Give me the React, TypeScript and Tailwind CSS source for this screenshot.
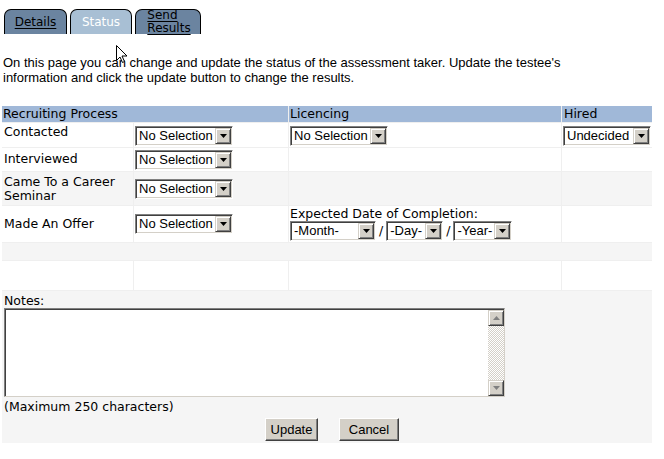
import React from "react";

const Arrow = ({ color = "#000" }: { color?: string }) => (
  <svg width="7" height="4" viewBox="0 0 7 4">
    <path d="M0 0 H7 L3.5 4 Z" fill={color} />
  </svg>
);

const ArrowUp = ({ color = "#000" }: { color?: string }) => (
  <svg width="7" height="4" viewBox="0 0 7 4">
    <path d="M0 4 H7 L3.5 0 Z" fill={color} />
  </svg>
);

const BtnBox = ({ children }: { children: React.ReactNode }) => (
  <div className="w-[16px] h-[16px] bg-[#d4d0c8] border border-t-[#d4d0c8] border-l-[#d4d0c8] border-r-[#404040] border-b-[#404040] shadow-[inset_1px_1px_#ffffff,inset_-1px_-1px_#808080] flex items-center justify-center shrink-0">
    {children}
  </div>
);

const Select = ({ label, w }: { label: string; w: string }) => (
  <div
    className={`${w} h-[20px] flex items-center bg-white border border-t-[#808080] border-l-[#808080] border-r-white border-b-white shadow-[inset_1px_1px_#404040,inset_-1px_-1px_#d4d0c8] p-[1px] font-['Liberation_Sans',Arial,sans-serif] text-[13px]`}
  >
    <span className="flex-1 pl-[2px] leading-[16px] whitespace-nowrap overflow-hidden">{label}</span>
    <BtnBox>
      <Arrow />
    </BtnBox>
  </div>
);

const Button = ({ label, w }: { label: string; w: string }) => (
  <div
    className={`${w} h-[23px] flex items-center justify-center bg-[#d4d0c8] border border-t-white border-l-white border-r-[#404040] border-b-[#404040] shadow-[inset_-1px_-1px_#808080] font-['Liberation_Sans',Arial,sans-serif] text-[13px]`}
  >
    {label}
  </div>
);

export default function App() {
  return (
    <div className="relative w-[664px] h-[459px] bg-white text-black text-[12.5px] font-['DejaVu_Sans',sans-serif]">
      {/* Tabs */}
      <div className="flex items-end gap-[3px] pl-[4px] pt-[9px] h-[34px] text-[12px]">
        <div className="w-[63px] h-[25px] bg-[#6b84a0] border border-b-0 border-black rounded-t-[7px] flex justify-center items-center">
          <span className="underline underline-offset-[2px]">Details</span>
        </div>
        <div className="w-[62px] h-[25px] bg-[#a8bfd4] border border-b-0 border-black rounded-t-[7px] flex justify-center items-center text-white">
          <span>Status</span>
        </div>
        <div className="w-[66px] h-[25px] bg-[#6b84a0] border border-b-0 border-black rounded-t-[7px] flex justify-center items-start">
          <span className="underline underline-offset-[2px] leading-[13px] -mt-[1px] pl-[2px]">
            Send
            <br />
            Results
          </span>
        </div>
      </div>

      {/* Intro */}
      <p className="mt-[21px] ml-[3px] leading-[15px] text-[13px] font-['Liberation_Sans',Arial,sans-serif]">
        On this page you can change and update the status of the assessment taker. Update the testee's
        <br />
        information and click the update button to change the results.
      </p>

      {/* Table */}
      <div className="mt-[21px] ml-[2px] w-[650px] grid grid-cols-[131px_154px_272px_90px] gap-px bg-[#efefef]">
        {/* header */}
        <div className="col-span-2 h-[16px] bg-[#a0b8d8] pl-[1px] leading-[16px]">Recruiting Process</div>
        <div className="h-[16px] bg-[#a0b8d8] pl-[1px] leading-[16px]">Licencing</div>
        <div className="h-[16px] bg-[#a0b8d8] pl-[2px] leading-[16px]">Hired</div>

        {/* Contacted */}
        <div className="h-[24px] bg-white pl-[2px] pt-[1px] leading-[15px]">Contacted</div>
        <div className="h-[24px] bg-white pl-[1px] flex items-center pt-[2px]">
          <Select label="No Selection" w="w-[98px]" />
        </div>
        <div className="h-[24px] bg-white pl-[1px] flex items-center pt-[2px]">
          <Select label="No Selection" w="w-[98px]" />
        </div>
        <div className="h-[24px] bg-white pl-[1px] flex items-center pt-[2px]">
          <Select label="Undecided" w="w-[88px]" />
        </div>

        {/* Interviewed */}
        <div className="h-[23px] bg-white pl-[2px] flex items-center">Interviewed</div>
        <div className="h-[23px] bg-white pl-[1px] flex items-center">
          <Select label="No Selection" w="w-[98px]" />
        </div>
        <div className="h-[23px] bg-white" />
        <div className="h-[23px] bg-white" />

        {/* Came To */}
        <div className="h-[33px] bg-[#f5f5f5] pl-[2px] flex items-center leading-[14px]">
          Came To a Career
          <br />
          Seminar
        </div>
        <div className="h-[33px] bg-[#f5f5f5] pl-[1px] flex items-center">
          <Select label="No Selection" w="w-[98px]" />
        </div>
        <div className="h-[33px] bg-[#f5f5f5]" />
        <div className="h-[33px] bg-[#f5f5f5]" />

        {/* Made An Offer */}
        <div className="h-[36px] bg-white pl-[2px] flex items-center">Made An Offer</div>
        <div className="h-[36px] bg-white pl-[1px] flex items-center">
          <Select label="No Selection" w="w-[98px]" />
        </div>
        <div className="h-[36px] bg-white pl-[1px] flex flex-col justify-center">
          <div className="leading-[14px]">Expected Date of Completion:</div>
          <div className="flex items-center">
            <Select label="-Month-" w="w-[86px]" />
            <span className="px-[3px]">/</span>
            <Select label="-Day-" w="w-[57px]" />
            <span className="px-[3px]">/</span>
            <Select label="-Year-" w="w-[59px]" />
          </div>
        </div>
        <div className="h-[36px] bg-white" />

        {/* spacer gray row */}
        <div className="col-span-4 h-[17px] bg-[#f5f5f5]" />

        {/* empty white row */}
        <div className="h-[29px] bg-white" />
        <div className="h-[29px] bg-white" />
        <div className="h-[29px] bg-white" />
        <div className="h-[29px] bg-white" />

        {/* Notes */}
        <div className="col-span-4 h-[152px] bg-[#f5f5f5] flex flex-col pt-[2px]">
          <div className="pl-[2px] leading-[15px]">Notes:</div>
          <div className="ml-[2px] w-[501px] h-[89px] bg-white border border-t-[#808080] border-l-[#808080] border-r-[#d4d0c8] border-b-[#d4d0c8] shadow-[inset_1px_1px_#404040] pt-[1px] pl-[1px] flex justify-end">
            <div className="w-[16px] h-full flex flex-col">
              <BtnBox>
                <ArrowUp color="#808080" />
              </BtnBox>
              <div className="flex-1 bg-[repeating-conic-gradient(#d4d0c8_0_25%,#ffffff_0_50%)] bg-[length:2px_2px]" />
              <BtnBox>
                <Arrow color="#808080" />
              </BtnBox>
            </div>
          </div>
          <div className="pl-[2px] mt-[2px] leading-[15px]">(Maximum 250 characters)</div>
          <div className="flex justify-center gap-[21px] mt-[4px] pl-[10px]">
            <Button label="Update" w="w-[53px]" />
            <Button label="Cancel" w="w-[60px]" />
          </div>
        </div>
      </div>

      {/* mouse cursor */}
      <svg className="absolute left-[116px] top-[45px]" width="12" height="19" viewBox="0 0 12 19">
        <path d="M0.5 0.5 V15.5 L4 12 L6.5 17.5 L8.5 16.5 L6 11 H11 Z" fill="#fff" stroke="#000" strokeWidth="1" />
      </svg>
    </div>
  );
}
